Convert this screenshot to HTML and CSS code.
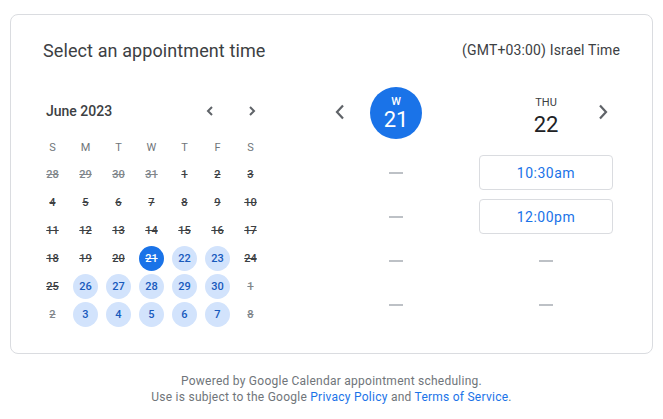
FILE: index.html
```html
<!DOCTYPE html>
<html>
<head>
<meta charset="utf-8">
<link rel="stylesheet" href="styles.css">
</head>
<body>
<div class="card">
  <div class="header">
    <h1 class="title">Select an appointment time</h1>
    <div class="tz">(GMT+03:00) Israel Time</div>
  </div>
  <div class="body">
    <div class="calendar">
      <div class="month-row">
        <span class="month">June 2023</span>
        <div class="month-nav">
          <button class="nav-small"><svg width="8" height="10" viewBox="0 0 8 10"><path d="M6 1 L2 5 L6 9" fill="none" stroke="#5f6368" stroke-width="2"/></svg></button>
          <button class="nav-small"><svg width="8" height="10" viewBox="0 0 8 10"><path d="M2 1 L6 5 L2 9" fill="none" stroke="#5f6368" stroke-width="2"/></svg></button>
        </div>
      </div>
      <div class="grid">
        <div class="wd">S</div><div class="wd">M</div><div class="wd">T</div><div class="wd">W</div><div class="wd">T</div><div class="wd">F</div><div class="wd">S</div>
        <div class="d other">28</div><div class="d other">29</div><div class="d other">30</div><div class="d other">31</div><div class="d past">1</div><div class="d past">2</div><div class="d past">3</div>
        <div class="d past">4</div><div class="d past">5</div><div class="d past">6</div><div class="d past">7</div><div class="d past">8</div><div class="d past">9</div><div class="d past">10</div>
        <div class="d past">11</div><div class="d past">12</div><div class="d past">13</div><div class="d past">14</div><div class="d past">15</div><div class="d past">16</div><div class="d past">17</div>
        <div class="d past">18</div><div class="d past">19</div><div class="d past">20</div><div class="d"><span class="sel">21</span></div><div class="d"><span class="av">22</span></div><div class="d"><span class="av">23</span></div><div class="d past">24</div>
        <div class="d past">25</div><div class="d"><span class="av">26</span></div><div class="d"><span class="av">27</span></div><div class="d"><span class="av">28</span></div><div class="d"><span class="av">29</span></div><div class="d"><span class="av">30</span></div><div class="d other">1</div>
        <div class="d other">2</div><div class="d"><span class="av">3</span></div><div class="d"><span class="av">4</span></div><div class="d"><span class="av">5</span></div><div class="d"><span class="av">6</span></div><div class="d"><span class="av">7</span></div><div class="d other">8</div>
      </div>
    </div>
    <div class="days">
      <button class="day-nav prev"><svg width="12" height="16" viewBox="0 0 12 16"><path d="M9 1.5 L3 8 L9 14.5" fill="none" stroke="#5f6368" stroke-width="2.2"/></svg></button>
      <button class="day-nav next"><svg width="12" height="16" viewBox="0 0 12 16"><path d="M3 1.5 L9 8 L3 14.5" fill="none" stroke="#5f6368" stroke-width="2.2"/></svg></button>
      <div class="day-head">
        <div class="today-circle"><span class="dow-w">W</span><span class="dnum-w">21</span></div>
      </div>
      <div class="day-head">
        <div class="plain-day"><span class="dow">THU</span><span class="dnum">22</span></div>
      </div>
      <div class="slots">
        <div class="dash"></div>
        <div class="dash"></div>
        <div class="dash"></div>
        <div class="dash"></div>
      </div>
      <div class="slots">
        <button class="slot">10:30am</button>
        <button class="slot">12:00pm</button>
        <div class="dash"></div>
        <div class="dash"></div>
      </div>
    </div>
  </div>
</div>
<footer class="footer">
  <div>Powered by Google Calendar appointment scheduling.</div>
  <div>Use is subject to the Google <a href="#">Privacy Policy</a> and <a href="#">Terms of Service</a>.</div>
</footer>
</body>
</html>
```
FILE: styles.css
```css
* { box-sizing: border-box; }
body {
  margin: 0;
  padding: 14px 10px 0;
  background: #fff;
  font-family: Roboto, "Liberation Sans", sans-serif;
  color: #3c4043;
}
button {
  font-family: inherit;
  background: none;
  border: none;
  padding: 0;
  cursor: pointer;
}
.card {
  width: 643px;
  height: 340px;
  border: 1px solid #dadce0;
  border-radius: 8px;
  padding: 23px 25px 0;
}
.header {
  display: flex;
  justify-content: space-between;
  align-items: center;
  height: 24px;
  padding: 0 7px;
}
.title {
  margin: 0;
  font-size: 18px;
  font-weight: 400;
  color: #3c4043;
  letter-spacing: 0.1px;
}
.tz {
  font-size: 14px;
  color: #3c4043;
  letter-spacing: 0.15px;
}
.body {
  display: flex;
  margin-top: 25px;
  gap: 62px;
}
.calendar {
  width: 231px;
}
.month-row {
  display: flex;
  justify-content: space-between;
  align-items: center;
  height: 48px;
  padding-left: 10px;
}
.month {
  font-size: 14px;
  font-weight: 500;
  color: #3c4043;
}
.month-nav {
  display: flex;
  gap: 10px;
  margin-right: -1px;
}
.nav-small {
  width: 32px;
  height: 32px;
  display: flex;
  align-items: center;
  justify-content: center;
}
.grid {
  display: grid;
  grid-template-columns: repeat(7, 33px);
  grid-template-rows: 25px;
  grid-auto-rows: 28px;
}
.wd {
  display: flex;
  align-items: center;
  justify-content: center;
  font-size: 11px;
  color: #70757a;
  font-weight: 400;
}
.d {
  display: flex;
  align-items: center;
  justify-content: center;
  font-size: 11px;
  font-weight: 500;
}
.past { color: #3c4043; text-decoration: line-through; }
.other { color: #80868b; text-decoration: line-through; }
.av, .sel {
  width: 25px;
  height: 25px;
  border-radius: 50%;
  display: flex;
  align-items: center;
  justify-content: center;
}
.av { background: #d2e3fc; color: #185abc; }
.sel { background: #1a73e8; color: #fff; text-decoration: line-through; }
.days {
  position: relative;
  display: grid;
  grid-template-columns: 134px 134px;
  column-gap: 16px;
  align-content: start;
}
.day-nav {
  position: absolute;
  top: 9px;
  width: 32px;
  height: 32px;
  display: flex;
  align-items: center;
  justify-content: center;
}
.day-nav.prev { left: -5px; }
.day-nav.next { left: 258px; }
.day-head {
  height: 52px;
  display: flex;
  justify-content: center;
  margin-bottom: 16px;
}
.today-circle {
  width: 52px;
  height: 52px;
  border-radius: 50%;
  background: #1a73e8;
  color: #fff;
  display: flex;
  flex-direction: column;
  align-items: center;
  justify-content: center;
}
.dow-w { font-size: 11px; font-weight: 500; line-height: 12px; margin-top: 2px; }
.dnum-w { font-size: 22px; line-height: 24px; }
.plain-day {
  display: flex;
  flex-direction: column;
  align-items: center;
  padding-top: 9px;
}
.dow { font-size: 11px; font-weight: 400; color: #3c4043; line-height: 14px; }
.dnum { font-size: 22px; color: #202124; line-height: 30px; }
.slots {
  display: flex;
  flex-direction: column;
  gap: 9px;
}
.slot, .slots .dash {
  height: 35px;
}
.slot {
  border: 1px solid #dadce0;
  border-radius: 4px;
  color: #1a73e8;
  font-size: 14px;
  font-weight: 400;
  letter-spacing: 0.5px;
}
.dash {
  position: relative;
}
.dash::after {
  content: "";
  position: absolute;
  left: 60px;
  top: 17px;
  width: 14px;
  height: 2px;
  background: #bdc1c6;
}
.footer {
  margin-top: 19px;
  text-align: center;
  font-size: 12px;
  line-height: 16px;
  color: #70757a;
  letter-spacing: 0.25px;
}
.footer a {
  color: #1a73e8;
  text-decoration: none;
}
```
